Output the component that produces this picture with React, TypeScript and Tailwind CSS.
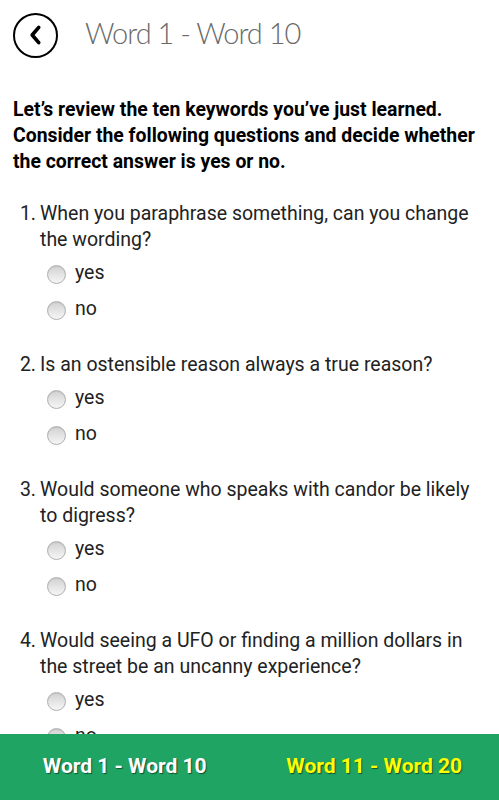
import React from "react";

const questions = [
  "When you paraphrase something, can you change the wording?",
  "Is an ostensible reason always a true reason?",
  "Would someone who speaks with candor be likely to digress?",
  "Would seeing a UFO or finding a million dollars in the street be an uncanny experience?",
];

function Radio() {
  return (
    <span className="inline-block w-[19px] h-[19px] rounded-full border border-[#b0b0b0] bg-gradient-to-b from-[#d2d2d2] to-[#f6f6f6] shadow-[inset_0_1px_1px_rgba(0,0,0,0.08)]" />
  );
}

export default function App() {
  return (
    <div className="min-h-screen bg-white text-black" style={{ fontFamily: "Roboto, 'Liberation Sans', sans-serif" }}>
      {/* Header */}
      <header className="flex items-center h-[70px] pl-[13px]">
        <button className="w-[45px] h-[45px] rounded-full border-2 border-black flex items-center justify-center">
          <svg width="26" height="26" viewBox="0 0 24 24" fill="none" stroke="black" strokeWidth="3.4" strokeLinecap="round" strokeLinejoin="round">
            <path d="M14.5 5 L8.5 12 L14.5 19" />
          </svg>
        </button>
        <h1 className="ml-[27px] -mt-[4px] text-[29px] font-light text-[#6a6a6a] tracking-[-1px]" style={{ fontFamily: "Lato, 'Open Sans', sans-serif" }}>
          Word 1 - Word 10
        </h1>
      </header>

      <main className="pl-[13px] pr-[6px] pt-[27px] pb-[20px]">
        <p className="font-bold text-[19.4px] leading-[26px]">
          Let’s review the ten keywords you’ve just learned. Consider the following questions and decide whether the correct answer is yes or no.
        </p>

        <ol className="mt-[26px] flex flex-col gap-[24px]">
          {questions.map((q, i) => (
            <li key={i} className="text-[19.5px] leading-[26px] text-[#222]">
              <div className="flex">
                <span className="w-[27px] shrink-0 text-right pr-[4px]">{i + 1}.</span>
                <span className="pr-[13px]">{q}</span>
              </div>
              <div className="mt-[3px] pl-[34px]">
                {["yes", "no"].map((opt) => (
                  <label key={opt} className="flex items-center h-[36px]">
                    <Radio />
                    <span className="ml-[9px] -mt-[2px]">{opt}</span>
                  </label>
                ))}
              </div>
            </li>
          ))}
        </ol>
      </main>

      {/* Bottom nav */}
      <nav className="fixed bottom-0 left-0 right-0 h-[66px] bg-[#1fa463] flex items-center">
        <a className="flex-1 text-center text-white font-bold text-[21px] [text-shadow:1px_1px_1px_rgba(0,0,0,0.5)]">
          Word 1 - Word 10
        </a>
        <a className="flex-1 text-center text-[#ffff00] font-bold text-[21px] [text-shadow:1px_1px_1px_rgba(0,0,0,0.5)]">
          Word 11 - Word 20
        </a>
      </nav>
    </div>
  );
}
